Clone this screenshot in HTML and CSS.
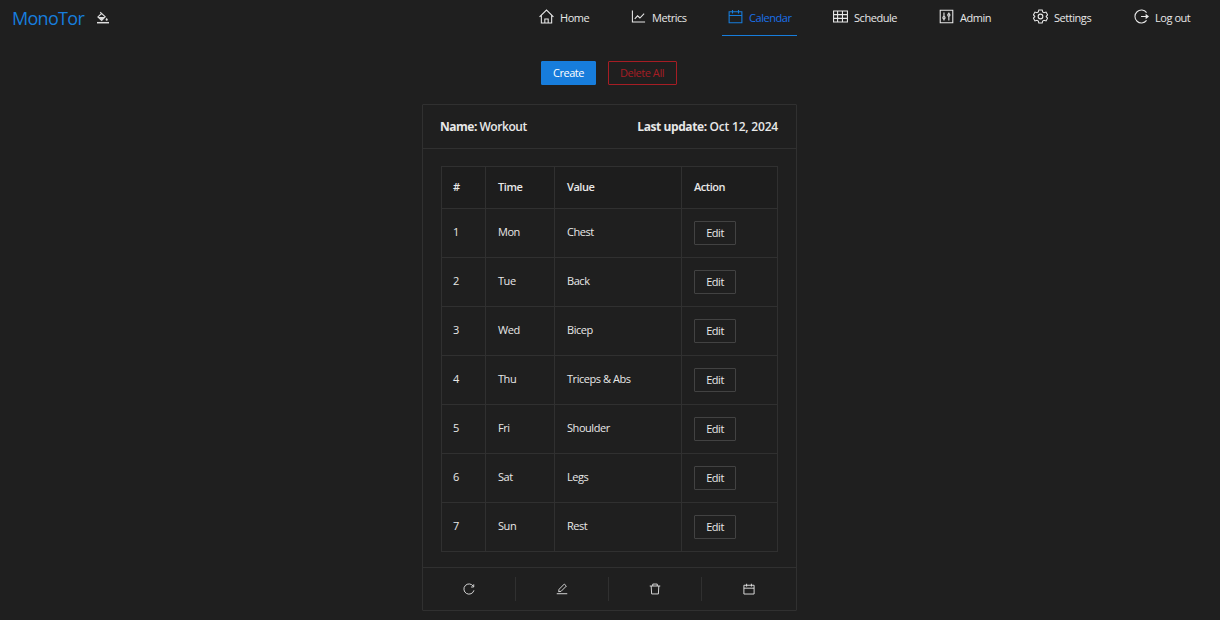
FILE: index.html
```
<!DOCTYPE html>
<html lang="en">
<head>
<meta charset="utf-8">
<title>MonoTor</title>
<link rel="stylesheet" href="styles.css">
</head>
<body>
<header class="header">
  <div class="brand"><span class="logo">MonoTor</span>
    <svg class="theme-icon" viewBox="0 0 14 14"><path d="M4.2 1.2l5 4.6-3.5 3.6L1.9 5.9l3.7-3.4" fill="none" stroke="currentColor" stroke-width="1.1"/><path d="M2.3 6h6.6L5.7 9.2zM10.7 6.8c-.7 1-1.1 1.500-1.100 1.900a1.100 1.100 0 0 0 2.200 0c0-.4-.4-.9-1.100-1.900z" fill="currentColor"/><path d="M1 11.700h12" stroke="currentColor" stroke-width="1.500"/></svg>
  </div>
  <nav class="nav">
    <a class="item"><svg class="icon" viewBox="0 0 16 16"><path d="M.6 8.400L8 1.200l7.400 7.200M2.500 7v8h11V7M6.200 15v-4.300h3.600V15"/></svg><span>Home</span></a>
    <a class="item"><svg class="icon" viewBox="0 0 16 16"><path d="M1.500 1.500v12.300h13.500M4 10.500l3-3.200 2.500 2.300 4.500-4.700"/></svg><span>Metrics</span></a>
    <a class="item active"><svg class="icon" viewBox="0 0 16 16"><path d="M1.200 3h13.600v11.700H1.200zM1.200 6.900h13.600M4.800 1v3.800M11.200 1v3.800"/></svg><span class="current">Calendar</span></a>
    <a class="item"><svg class="icon" viewBox="0 0 16 16"><path d="M.6 2.200h14.800v11.600H.6zM.6 6h14.800M.6 10h14.800M4.900 2.200v11.600M10.100 2.200v11.600"/></svg><span>Schedule</span></a>
    <a class="item"><svg class="icon" viewBox="0 0 16 16"><path d="M1.300 1.300h13.400v13.400H1.300zM5.300 3.800v4.300M5.300 10.600v1.600M10.500 3.800v1.400M10.500 7.700v4.500"/><circle cx="5.300" cy="9.300" r="1.200"/><circle cx="10.500" cy="6.400" r="1.200"/></svg><span>Admin</span></a>
    <a class="item"><svg class="icon" viewBox="0 0 16 16"><path d="M6.200 1h3.600l.5 2.100 1.500.9 2.100-.7 1.700 3-1.500 1.500v.4l1.500 1.500-1.700 3-2.100-.7-1.500.9-.5 2.100H6.200l-.5-2.100-1.500-.9-2.100.7-1.700-3 1.500-1.500v-.4L.4 6.300l1.700-3 2.100.7 1.500-.9z"/><circle cx="8" cy="8" r="2.500"/></svg><span>Settings</span></a>
    <a class="item"><svg class="icon" viewBox="0 0 16 16"><path d="M13.400 3.800a6.900 6.900 0 1 0 0 8.400M7.500 8h7M13 6.200L15.200 8 13 9.800z"/></svg><span>Log out</span></a>
  </nav>
</header>
<main class="main">
  <div class="toolbar"><button class="btn primary">Create</button><button class="btn danger">Delete All</button></div>
  <section class="card">
    <div class="card-head"><div><b>Name:</b> Workout</div><div class="updated"><b>Last update:</b> Oct 12, 2024</div></div>
    <div class="card-body">
      <table class="table">
        <colgroup><col class="c-num"><col class="c-time"><col class="c-value"><col></colgroup>
        <thead><tr><th>#</th><th>Time</th><th>Value</th><th>Action</th></tr></thead>
        <tbody>
          <tr><td>1</td><td>Mon</td><td>Chest</td><td><button class="btn edit">Edit</button></td></tr>
          <tr><td>2</td><td>Tue</td><td>Back</td><td><button class="btn edit">Edit</button></td></tr>
          <tr><td>3</td><td>Wed</td><td>Bicep</td><td><button class="btn edit">Edit</button></td></tr>
          <tr><td>4</td><td>Thu</td><td>Triceps &amp; Abs</td><td><button class="btn edit">Edit</button></td></tr>
          <tr><td>5</td><td>Fri</td><td>Shoulder</td><td><button class="btn edit">Edit</button></td></tr>
          <tr><td>6</td><td>Sat</td><td>Legs</td><td><button class="btn edit">Edit</button></td></tr>
          <tr><td>7</td><td>Sun</td><td>Rest</td><td><button class="btn edit">Edit</button></td></tr>
        </tbody>
      </table>
    </div>
    <div class="actions">
      <div class="action"><svg class="small" viewBox="0 0 16 16"><path d="M13.700 4.300a6.800 6.800 0 1 0 .9 5.500M14.300 1.800v3.500h-3.500"/></svg></div>
      <div class="action"><svg class="small" viewBox="0 0 16 16"><path d="M1 14.300h14M3.500 11.600l.6-3.200 7-7 2.700 2.700-7 7z"/></svg></div>
      <div class="action"><svg class="small" viewBox="0 0 16 16"><path d="M1 4h14M5 4V1.400h6V4M2.900 4l.6 10.600h9L13.100 4"/></svg></div>
      <div class="action"><svg class="small" viewBox="0 0 16 16"><path d="M1.200 3h13.600v11.700H1.200zM1.200 6.900h13.600M4.800 1v3.800M11.200 1v3.800"/></svg></div>
    </div>
  </section>
</main>
</body>
</html>
```
FILE: styles.css
```
* { box-sizing: border-box; }
body {
  margin: 0;
  height: 620px;
  overflow: hidden;
  background: #1f1f1f;
  color: #e8e8e8;
  font: 11px/18px "Open Sans", "Noto Sans", sans-serif;
  letter-spacing: -0.45px;
}
.header { display: flex; justify-content: space-between; height: 36px; padding: 0 23px 0 12px; }
.brand { display: flex; align-items: center; gap: 11px; }
.logo { width: 72.500px; color: #177ddc; font-size: 18px; line-height: 36px; letter-spacing: -0.7px; white-space: nowrap; }
.theme-icon { width: 14px; height: 14px; color: #dedede; }
.nav { display: grid; grid-template-columns: 62px 67px 75px 76px 64px 71px 69px; column-gap: 30px; }
.item { display: flex; align-items: center; gap: 6px; padding: 0 6px; white-space: nowrap; border-bottom: 1px solid transparent; }
.item.active { color: #177ddc; border-color: #177ddc; }
.current { color: #1a70ea; }
.icon { flex: none; width: 15px; height: 15px; margin-bottom: 2px; fill: none; stroke: currentColor; stroke-width: 1.15; }
.main { display: flex; flex-direction: column; align-items: center; padding: 25px 1px 0 0; }
.toolbar { display: flex; gap: 12px; margin-bottom: 19px; padding-right: 1px; }
.btn { height: 24px; padding: 0; border: 1px solid #424242; border-radius: 1px; background: transparent; color: #e8e8e8; font: inherit; letter-spacing: inherit; }
.primary { width: 55px; background: #177ddc; border-color: #177ddc; color: #fff; }
.danger { width: 69px; padding-right: 1px; border-color: #a61d24; color: #a61d24; }
.card { width: 375px; height: 507px; border: 1px solid #303030; border-radius: 1px; }
.card-head { display: flex; justify-content: space-between; align-items: center; height: 44px; padding: 0 18px 0 17px; border-bottom: 1px solid #303030; font-size: 12px; font-weight: 600; }
.card-head b { font-weight: 700; letter-spacing: -0.5px; }
.updated { letter-spacing: -0.2px; }
.updated b { letter-spacing: -0.42px; }
.card-body { height: 418px; padding: 17px 18px 0; }
.table { width: 337px; table-layout: fixed; border-collapse: separate; border-spacing: 0; border-top: 1px solid #303030; border-left: 1px solid #303030; }
.c-num { width: 44px; }
.c-time { width: 69px; }
.c-value { width: 127px; }
.table th, .table td { padding: 0 12px; border-right: 1px solid #303030; border-bottom: 1px solid #303030; text-align: left; }
.table th:first-child, .table td:first-child { padding-left: 11px; }
.table th { height: 42px; padding-bottom: 2px; background: #1d1d1d; font-weight: 600; }
.table td { height: 49px; padding-bottom: 2px; }
.table td:last-child { padding-bottom: 0; }
.edit { display: block; width: 42px; }
.actions { display: grid; grid-template-columns: 93px 93px 93px 94px; height: 43px; padding: 9px 0; border-top: 1px solid #303030; }
.action { display: flex; align-items: center; justify-content: center; border-right: 1px solid #303030; }
.action:last-child { border-right: 0; }
.small { width: 12px; height: 12px; fill: none; stroke: currentColor; stroke-width: 1.2; }
```
